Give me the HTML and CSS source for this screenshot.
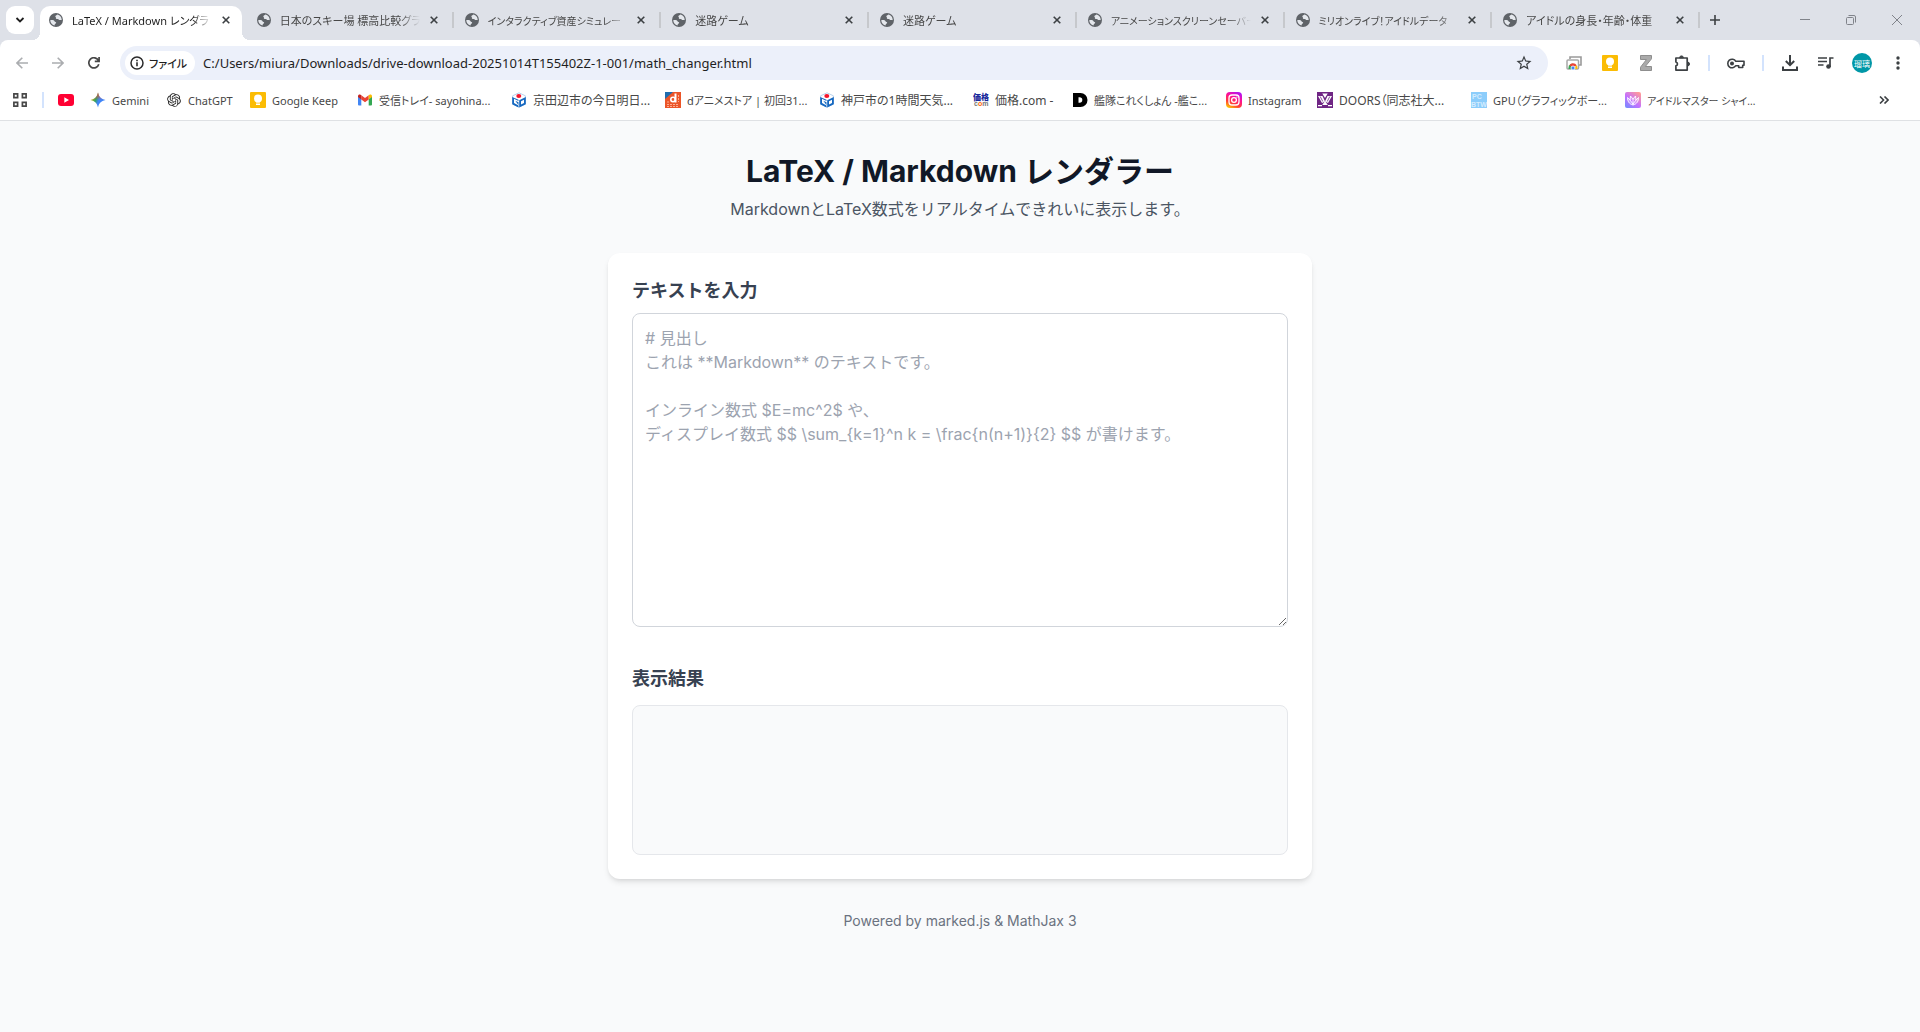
FILE: index.html
```html
<!DOCTYPE html>
<html lang="ja">
<head>
<meta charset="utf-8">
<title>LaTeX / Markdown レンダラー</title>
<link rel="stylesheet" href="styles.css">
</head>
<body>
<svg class="defs" aria-hidden="true">
  <defs>
    <symbol id="globe" viewBox="0 0 14 14"><circle cx="7" cy="7" r="7" fill="#5f6368"/><path d="M1.300 7c1.200.100 2.300-.1 3.300.300 1 .400.900 1.500 1.900 1.700.800.200.900.900.200 1.500-.5.500-1.200.9-1.200 2C3 12 1.200 9.700 1.300 7zM8.200 1.400c-.2.900-1.600.8-1.900 1.700-.2.900.9 1 .6 1.800-.3.700.8 1.100 1.800 1 .9-.1 1 1.100 2 1.200.7 0 1.400-.3 2 .1.200-2.900-1.700-5.300-4.500-5.800z" fill="#e4e7ec"/></symbol>
    <symbol id="close" viewBox="0 0 8 8"><path d="M.7.7l6.600 6.600M7.300.7L.7 7.300" stroke="currentColor" stroke-width="1.600"/></symbol>
    <symbol id="keep" viewBox="0 0 16 16"><rect width="16" height="16" rx="1" fill="#fbbc04"/><circle cx="8" cy="6.500" r="4" fill="#fff"/><path d="M6 9h4v1.500H6zM6 11.500h4V13H6z" fill="#fff"/></symbol>
    <symbol id="cube" viewBox="0 0 16 16"><path d="M8 .8l6.400 3v8.400L8 15.200l-6.400-3V3.800z" fill="#fff" stroke="#b9d3ee" stroke-width="1"/><path d="M1.200 5v7.300l6.300 3.200v-2L3 11V6.800L7.500 9V7.800z" fill="#1668c0"/><path d="M4.300 8.700l3.200 1.500v3z" fill="#1668c0"/><path d="M8.200 8.200l6.600-3.200v7.300l-6.600 3.200zM10 9.300v3.200l3-1.500V7.800z" fill="#1668c0" fill-rule="evenodd"/><ellipse cx="7.800" cy="4" rx="2.500" ry="1.900" fill="#f5152b"/></symbol>
  </defs>
</svg>

<header class="browser">
  <div class="tabstrip">
    <button class="tab-search" aria-label="タブを検索"><svg width="10" height="6" viewBox="0 0 10 6"><path d="M1.500 1L5 4.500 8.500 1" fill="none" stroke="#1f1f1f" stroke-width="1.800"/></svg></button>
    <div class="tabs" role="tablist">
      <div class="tab active"><svg class="favicon"><use href="#globe"/></svg><span class="tab-title">LaTeX / Markdown レンダラ</span><button class="tab-close" aria-label="閉じる"><svg><use href="#close"/></svg></button></div>
      <div class="tab"><svg class="favicon"><use href="#globe"/></svg><span class="tab-title">日本のスキー場 標高比較グラ</span><button class="tab-close" aria-label="閉じる"><svg><use href="#close"/></svg></button></div>
      <div class="tab"><svg class="favicon"><use href="#globe"/></svg><span class="tab-title dense">インタラクティブ資産シミュレー</span><button class="tab-close" aria-label="閉じる"><svg><use href="#close"/></svg></button></div>
      <div class="tab"><svg class="favicon"><use href="#globe"/></svg><span class="tab-title">迷路ゲーム</span><button class="tab-close" aria-label="閉じる"><svg><use href="#close"/></svg></button></div>
      <div class="tab"><svg class="favicon"><use href="#globe"/></svg><span class="tab-title">迷路ゲーム</span><button class="tab-close" aria-label="閉じる"><svg><use href="#close"/></svg></button></div>
      <div class="tab"><svg class="favicon"><use href="#globe"/></svg><span class="tab-title dense">アニメーションスクリーンセーバー</span><button class="tab-close" aria-label="閉じる"><svg><use href="#close"/></svg></button></div>
      <div class="tab"><svg class="favicon"><use href="#globe"/></svg><span class="tab-title dense">ミリオンライブ！アイドルデータ</span><button class="tab-close" aria-label="閉じる"><svg><use href="#close"/></svg></button></div>
      <div class="tab"><svg class="favicon"><use href="#globe"/></svg><span class="tab-title">アイドルの身長・年齢・体重</span><button class="tab-close" aria-label="閉じる"><svg><use href="#close"/></svg></button></div>
    </div>
    <button class="new-tab" aria-label="新しいタブ"><svg width="10" height="10" viewBox="0 0 10 10"><path d="M5 0v10M0 5h10" stroke="#3c4043" stroke-width="1.600"/></svg></button>
    <div class="window-controls">
      <button aria-label="最小化"><svg width="10" height="10" viewBox="0 0 10 10"><path d="M0 4.500h10" stroke="#80838a"/></svg></button>
      <button aria-label="元に戻す"><svg width="10" height="10" viewBox="0 0 10 10" fill="none" stroke="#80838a"><rect x=".5" y="2.500" width="7" height="7" rx="1"/><path d="M2.500.5h5.500a1.500 1.500 0 0 1 1.500 1.500v5.500"/></svg></button>
      <button aria-label="ウィンドウを閉じる"><svg width="10" height="10" viewBox="0 0 10 10"><path d="M0 0l10 10M10 0L0 10" stroke="#80838a"/></svg></button>
    </div>
  </div>

  <div class="toolbar">
    <button class="tool" aria-label="戻る"><svg width="12" height="12" viewBox="0 0 12 12" fill="none" stroke="#abadb0" stroke-width="1.600"><path d="M12 6H1.200M6.300.7L1 6l5.300 5.300"/></svg></button>
    <button class="tool" aria-label="進む"><svg width="12" height="12" viewBox="0 0 12 12" fill="none" stroke="#abadb0" stroke-width="1.600"><path d="M0 6h10.800M5.700.7L11 6l-5.300 5.300"/></svg></button>
    <button class="tool" aria-label="再読み込み"><svg width="12" height="12" viewBox="0 0 12 12" fill="none" stroke="#474747" stroke-width="1.700"><path d="M10.800 7.300A5.100 5.100 0 1 1 10.400 3.400M11.100 0v4.300H6.800"/></svg></button>
    <div class="omnibox">
      <button class="chip"><svg width="14" height="14" viewBox="0 0 14 14"><circle cx="7" cy="7" r="6" fill="none" stroke="#2b2b2b" stroke-width="1.500"/><path d="M6.200 6.200h1.600v4H6.200zM6.200 3.700h1.600v1.500H6.200z" fill="#2b2b2b"/></svg>ファイル</button>
      <input class="url" type="text" aria-label="アドレス" value="C:/Users/miura/Downloads/drive-download-20251014T155402Z-1-001/math_changer.html">
      <button class="star" aria-label="ブックマーク"><svg width="18" height="18" viewBox="0 0 24 24"><path fill="#3c4043" d="M22 9.240l-7.190-.620L12 2 9.190 8.630 2 9.240l5.460 4.730L5.820 21 12 17.270 18.180 21l-1.630-7.030L22 9.240zM12 15.400l-3.760 2.270 1-4.280-3.320-2.880 4.380-.380L12 6.100l1.710 4.040 4.380.380-3.320 2.880 1 4.280L12 15.400z"/></svg></button>
    </div>
    <div class="tools">
      <button class="tool" aria-label="リモート デスクトップ"><svg width="16" height="14" viewBox="0 0 16 14"><path d="M4 3V1h11v8h-2" fill="none" stroke="#9a9a9a" stroke-width="1.600"/><rect x="1" y="4" width="11.500" height="9" rx="1" fill="#fff" stroke="#a8a8a8" stroke-width="1.500"/><path d="M2.500 13a4.500 4.500 0 0 1 4.300-5.500L7 13z" fill="#34a853"/><path d="M3.300 9.200a4.500 4.500 0 0 1 7.500 0L7 12z" fill="#ea4335"/><path d="M10.800 9.200A4.500 4.500 0 0 1 11.300 13H7z" fill="#fbbc04"/><circle cx="7" cy="12" r="2" fill="#4285f4" stroke="#fff" stroke-width=".8"/></svg></button>
      <button class="tool" aria-label="Google Keep"><svg width="16" height="16"><use href="#keep"/></svg></button>
      <button class="tool" aria-label="Zotero"><svg width="12" height="16" viewBox="0 0 12 16"><path d="M.5.5h11v3.300L5.300 11.500h6.200v4H.5v-3.300L6.500 4.500h-6z" fill="#aaa" stroke="#8e8e8e"/></svg></button>
      <button class="tool" aria-label="拡張機能"><svg width="17" height="17" viewBox="0 0 17 17"><path d="M1.900 3h11.300v12.100H1.900v-4.200a2 2 0 0 0 0-3.900z" fill="none" stroke="#3c4043" stroke-width="1.700" stroke-linejoin="round"/><path d="M5.600 2.800a1.900 1.900 0 0 1 3.800 0zM13.600 7.100a1.900 1.900 0 0 1 0 3.800z" fill="#3c4043" stroke="#3c4043"/></svg></button>
      <span class="divider"></span>
      <button class="tool" aria-label="パスワード"><svg width="18" height="11" viewBox="0 0 18 11" fill="none" stroke="#3c4043" stroke-width="1.600"><path d="M8.800 3.300a4.300 4.300 0 1 0 0 4.400h2.900V9.500h4V7.300H17v-4z" stroke-linejoin="round"/><circle cx="5" cy="5.500" r="1.200" fill="#3c4043"/></svg></button>
      <span class="divider"></span>
      <button class="tool" aria-label="ダウンロード"><svg width="16" height="16" viewBox="0 0 16 16" fill="none" stroke="#3c4043" stroke-width="2"><path d="M8 0v10M3.800 6L8 10.200 12.200 6M1 11.500V15h14v-3.500"/></svg></button>
      <button class="tool" aria-label="メディア"><svg width="16" height="14" viewBox="0 0 16 14"><path d="M0 2h9M0 5.500h9M0 9h5.500M12 11V2h3.500" fill="none" stroke="#3c4043" stroke-width="1.700"/><circle cx="10.500" cy="10.500" r="2.300" fill="#3c4043"/></svg></button>
      <button class="tool" aria-label="プロフィール"><span class="avatar">瑠璃</span></button>
      <button class="tool" aria-label="メニュー"><svg width="4" height="14" viewBox="0 0 4 14" fill="#3c4043"><circle cx="2" cy="2" r="1.700"/><circle cx="2" cy="7" r="1.700"/><circle cx="2" cy="12" r="1.700"/></svg></button>
    </div>
  </div>

  <nav class="bookmarks" aria-label="ブックマーク バー">
    <button class="tool apps" aria-label="アプリ"><svg width="14" height="14" viewBox="0 0 14 14" fill="none" stroke="#474747" stroke-width="1.700"><path d="M.9.9h3.700v3.700H.9zM9.400.9h3.700v3.700H9.400zM.9 9.400h3.700v3.700H.9zM9.400 9.400h3.700v3.700H9.400z"/></svg></button>
    <span class="divider"></span>
    <a class="bookmark bm-icon" href="#" aria-label="YouTube"><svg viewBox="0 0 16 16"><rect y="2" width="16" height="12" rx="3" fill="#ff0033"/><path d="M6.300 5.300v5.400L11 8z" fill="#fff"/></svg></a>
    <a class="bookmark bm-xs" href="#"><svg viewBox="0 0 16 16"><defs><linearGradient id="gem" x1="0" y1=".3" x2="1" y2=".7"><stop offset="0" stop-color="#fbbc04"/><stop offset=".35" stop-color="#2fa35c"/><stop offset=".55" stop-color="#4285f4"/><stop offset="1" stop-color="#3c86ff"/></linearGradient><linearGradient id="gemr" x1="0" y1="0" x2="0" y2="1"><stop offset="0" stop-color="#f04438"/><stop offset=".5" stop-color="#f04438" stop-opacity="0"/></linearGradient></defs><path d="M8 .5C9 5 11 7 15.500 8 11 9 9 11 8 15.500 7 11 5 9 .5 8 5 7 7 5 8 .5z" fill="url(#gem)"/><path d="M8 .5C9 5 11 7 15.500 8 11 9 9 11 8 15.500 7 11 5 9 .5 8 5 7 7 5 8 .5z" fill="url(#gemr)"/></svg><span>Gemini</span></a>
    <a class="bookmark bm-sm" href="#"><svg viewBox="-2 -2 28 28"><path fill="#222" d="M22.2819 9.8211a5.9847 5.9847 0 0 0-.5157-4.9108 6.0462 6.0462 0 0 0-6.5098-2.900A6.0651 6.0651 0 0 0 4.9807 4.1818a5.9847 5.9847 0 0 0-3.9977 2.900 6.0462 6.0462 0 0 0 .7427 7.0966 5.980 5.980 0 0 0 .511 4.9107 6.051 6.051 0 0 0 6.5146 2.9001A5.9847 5.9847 0 0 0 13.2599 24a6.0557 6.0557 0 0 0 5.7718-4.2058 5.9894 5.9894 0 0 0 3.9977-2.9001 6.0557 6.0557 0 0 0-.7475-7.0729zm-9.022 12.6081a4.4755 4.4755 0 0 1-2.8764-1.0408l.1419-.0804 4.7783-2.7582a.7948.7948 0 0 0 .3927-.6813v-6.7369l2.020 1.1686a.071.071 0 0 1 .038.052v5.5826a4.504 4.504 0 0 1-4.4945 4.4944zm-9.6607-4.1254a4.4708 4.4708 0 0 1-.5346-3.0137l.142.0852 4.783 2.7582a.7712.7712 0 0 0 .7806 0l5.8428-3.3685v2.3324a.0804.0804 0 0 1-.0332.0615L9.740 19.9502a4.4992 4.4992 0 0 1-6.1408-1.6464zM2.3408 7.8956a4.485 4.485 0 0 1 2.3655-1.9728V11.600a.7664.7664 0 0 0 .3879.6765l5.8144 3.3543-2.0201 1.1685a.0757.0757 0 0 1-.071 0l-4.8303-2.7865A4.504 4.504 0 0 1 2.3408 7.872zm16.5963 3.8558L13.1038 8.364 15.1192 7.200a.0757.0757 0 0 1 .071 0l4.8303 2.7913a4.4944 4.4944 0 0 1-.6765 8.1042v-5.6772a.790.790 0 0 0-.407-.667zm2.0107-3.0231l-.142-.0852-4.7735-2.7818a.7759.7759 0 0 0-.7854 0L9.409 9.2297V6.8974a.0662.0662 0 0 1 .0284-.0615l4.8303-2.7866a4.4992 4.4992 0 0 1 6.6802 4.660zM8.3065 12.863l-2.020-1.1638a.0804.0804 0 0 1-.038-.0567V6.0742a4.4992 4.4992 0 0 1 7.3757-3.4537l-.142.0805L8.704 5.459a.7948.7948 0 0 0-.3927.6813zm1.0976-2.3654l2.602-1.4998 2.6069 1.4998v2.9994l-2.5974 1.4997-2.6067-1.4997Z"/></svg><span>ChatGPT</span></a>
    <a class="bookmark bm-md" href="#"><svg><use href="#keep"/></svg><span>Google Keep</span></a>
    <a class="bookmark bm-lg" href="#"><svg viewBox="0 0 16 16"><path d="M1 4l3.300 2.400V13.500H2a1 1 0 0 1-1-1z" fill="#4285f4"/><path d="M15 4l-3.300 2.400V13.500H14a1 1 0 0 0 1-1z" fill="#34a853"/><path d="M4.300 3.300L8 6.100l3.700-2.800v4.100L8 10.200 4.300 7.400z" fill="#ea4335"/><path d="M1 4.200c0-1.600 1.600-2.200 2.800-1.300l.5.400v4.100L1 5z" fill="#c5221f"/><path d="M15 4.200c0-1.600-1.600-2.200-2.800-1.300l-.5.400v4.100L15 5z" fill="#fbbc04"/></svg><span>受信トレイ- sayohina...</span></a>
    <a class="bookmark bm-lg wide" href="#"><svg><use href="#cube"/></svg><span>京田辺市の今日明日...</span></a>
    <a class="bookmark bm-lg" href="#"><svg viewBox="0 0 16 16"><rect width="16" height="16" fill="#eb5528"/><path d="M0 0h8L0 7z" fill="#1f6cae"/><path d="M10.500 1.500v9" fill="none" stroke="#fff" stroke-width="2"/><circle cx="8" cy="7.500" r="2.200" fill="none" stroke="#fff" stroke-width="1.600"/><path d="M2 12.500h12M2 14.500h12M13.500 3v7M2 10h2" fill="none" stroke="#ffb59c" stroke-width=".9" stroke-dasharray="2 1"/></svg><span>dアニメストア | 初回31...</span></a>
    <a class="bookmark bm-lg wide" href="#"><svg><use href="#cube"/></svg><span>神戸市の1時間天気...</span></a>
    <a class="bookmark bm-md2 wide" href="#"><svg viewBox="0 0 16 16"><text x="0" y="8" class="logo-kakaku">価格</text><text x="1" y="14" class="logo-com">c<tspan fill="#f60">o</tspan>m</text></svg><span>価格.com -</span></a>
    <a class="bookmark bm-lg" href="#"><svg viewBox="0 0 16 16"><path d="M1 1h7.500a7 7 0 0 1 0 14H1z"/><path d="M6.500 5.200h1a2.800 2.800 0 0 1 0 5.600h-1z" fill="#fff"/></svg><span>艦隊これくしょん -艦こ...</span></a>
    <a class="bookmark bm-sm2" href="#"><svg viewBox="0 0 16 16"><defs><linearGradient id="ig" x1=".2" y1="1" x2=".7" y2="0"><stop offset="0" stop-color="#ffc800"/><stop offset=".3" stop-color="#ff3f35"/><stop offset=".65" stop-color="#ff0f96"/><stop offset="1" stop-color="#b414f0"/></linearGradient></defs><rect width="16" height="16" rx="4" fill="url(#ig)"/><g fill="none" stroke="#fff" stroke-width="1.300"><rect x="3" y="3" width="10" height="10" rx="3"/><circle cx="8" cy="8" r="2.400"/></g><circle cx="10.900" cy="5.100" r=".7" fill="#fff"/></svg><span>Instagram</span></a>
    <a class="bookmark bm-lg wide" href="#"><svg viewBox="0 0 16 16"><rect width="16" height="16" fill="#6f2584"/><path d="M8 6L5.300 1.500h5.400zM1 4h4.500L8 9.500 5 11zM15 4h-4.500L8 9.500l3 1.500z" fill="#fff"/><path d="M8 9l2.800 4H5.200z" fill="#fff"/><path d="M3.200 4.500l2.600 5M12.800 4.500l-2.600 5" stroke="#6f2584" stroke-width=".8"/><path d="M1 13.700h4M11 13.700h4" stroke="#fff" stroke-width="1.200"/></svg><span>DOORS（同志社大...</span></a>
    <a class="bookmark bm-lg" href="#"><svg viewBox="0 0 16 16"><rect width="16" height="16" fill="#8ccdfb"/><text x="1" y="7" class="logo-pc">PC</text><text x="0" y="15" class="logo-pc">BTW</text></svg><span>GPU（グラフィックボー...</span></a>
    <a class="bookmark bm-lg dense" href="#"><svg viewBox="0 0 16 16"><defs><linearGradient id="idol" x1="0" y1="1" x2=".8" y2="0"><stop offset="0" stop-color="#6f8cff"/><stop offset=".5" stop-color="#c470ff"/><stop offset="1" stop-color="#ff9a9a"/></linearGradient></defs><rect width="16" height="16" rx="2" fill="url(#idol)"/><path d="M8 13C4 12 2.500 9 2.500 5.500L5 8l.5-4L8 7l2.500-3 .5 4 2.500-2.500C13.500 9 12 12 8 13zM8 7v6M5 8l3 4 3-4" fill="#ffffff40" stroke="#fff" stroke-width=".9"/></svg><span>アイドルマスター シャイ...</span></a>
    <button class="tool more" aria-label="その他"><svg width="10" height="8" viewBox="0 0 10 8" fill="none" stroke="#3c4043" stroke-width="1.600"><path d="M1 .5L4.500 4 1 7.500M5.500.5L9 4 5.500 7.500"/></svg></button>
  </nav>
</header>

<main class="page">
  <header class="intro">
    <h1>LaTeX / Markdown レンダラー</h1>
    <p>MarkdownとLaTeX数式をリアルタイムできれいに表示します。</p>
  </header>
  <section class="card">
    <div class="field">
      <label for="source">テキストを入力</label>
      <textarea id="source" rows="12" placeholder="# 見出し
これは **Markdown** のテキストです。

インライン数式 $E=mc^2$ や、
ディスプレイ数式 $$ \sum_{k=1}^n k = \frac{n(n+1)}{2} $$ が書けます。"></textarea>
    </div>
    <h2>表示結果</h2>
    <div class="result"></div>
  </section>
  <footer>Powered by marked.js &amp; MathJax 3</footer>
</main>
</body>
</html>
```

FILE: styles.css
```css
*, *::before, *::after { box-sizing: border-box; }
body {
  margin: 0;
  min-height: 100vh;
  background: #f9fafb;
  font-family: Inter, "Noto Sans CJK JP", sans-serif;
  color: #1f2937;
}
h1, h2, p { margin: 0; }
button { border: 0; padding: 0; background: none; color: inherit; font: inherit; }
.defs { display: none; }

/* Browser frame */
.browser {
  font-family: "Noto Sans", "Noto Sans CJK JP", sans-serif;
  font-size: 11px;
  font-feature-settings: "palt";
  color: #474747;
  background: #dee1e8;
  border-bottom: 1px solid #dfe1e4;
}
.browser svg { display: block; flex: none; }
.browser .dense { font-size: 10px; }
.browser .wide { font-size: 12px; }
.tabstrip { display: flex; height: 40px; padding-left: 6px; }
.tab-search {
  display: flex; align-items: center; justify-content: center; flex: none;
  width: 28px; height: 28px; margin: 6px 2px 0 0;
  border-radius: 9px; background: #fff;
}
.tabs { display: flex; flex: 0 1 1662px; min-width: 0; }
.tab {
  position: relative;
  display: flex; align-items: center; flex: 1 1 0; min-width: 0;
  padding: 0 14px 0 13px;
}
.tab::after {
  content: ""; position: absolute; right: -2px; top: 12px;
  width: 2px; height: 16px; background: #c6c8cc;
}
.tab.active { color: #1f1f1f; z-index: 0; }
.tab.active::before {
  content: ""; position: absolute; z-index: -1; inset: 6px 2px 0 4px;
  border-radius: 10px 10px 0 0; background: #fff;
}
.tab.active::after {
  left: -4px; right: -6px; top: auto; bottom: 0; width: auto; height: 8px; z-index: -1;
  background:
    radial-gradient(circle at 0 0, transparent 8px, #fff 8px) left / 8px 8px no-repeat,
    radial-gradient(circle at 100% 0, transparent 8px, #fff 8px) right / 8px 8px no-repeat;
}
.favicon { width: 14px; height: 14px; }
.tab-title {
  flex: 1; min-width: 0; margin: 0 10px 0 9px;
  overflow: hidden; white-space: nowrap;
  mask-image: linear-gradient(to left, transparent, #000 20px);
}
.tab-close { color: #3c4043; }
.tab-close svg { width: 8px; height: 8px; }
.new-tab { display: flex; align-items: center; justify-content: center; width: 34px; }
.window-controls { display: flex; margin-left: auto; }
.window-controls button { display: flex; align-items: center; justify-content: center; width: 46px; }

.toolbar {
  display: flex; align-items: center; height: 46px; padding: 0 4px;
  border-radius: 8px 8px 0 0; background: #fff;
}
.tool { display: flex; align-items: center; justify-content: center; flex: none; width: 36px; height: 32px; }
.omnibox {
  display: flex; align-items: center; flex: 1; min-width: 0;
  height: 34px; margin: 0 8px; padding: 0 10px 0 5px;
  border-radius: 17px; background: #ecf0fa;
}
.chip {
  display: flex; align-items: center; gap: 5px; flex: none;
  height: 24px; padding: 0 8px 0 5px;
  border-radius: 12px; background: #fff; color: #1f1f1f; font-weight: 500;
}
.url {
  flex: 1; min-width: 0; border: 0; padding: 0 8px; background: none;
  font-family: inherit; font-size: 13px; color: #1f1f1f;
}
.star { display: flex; align-items: center; justify-content: center; width: 28px; }
.tools { display: flex; align-items: center; }
.divider { flex: none; width: 2px; height: 16px; margin: 0 8px; background: #d3e3fd; }
.avatar {
  display: flex; align-items: center; justify-content: center;
  width: 20px; height: 20px; border-radius: 50%;
  background: #0097a7; color: #fff; font-size: 8px;
}

.bookmarks { display: flex; align-items: center; height: 34px; padding: 0 18px 6px 2px; background: #fff; }
.bookmarks .divider { margin: 0 14px 0 4px; }
.bookmark {
  display: flex; align-items: center; gap: 6px; flex: none;
  color: #474747; text-decoration: none; white-space: nowrap;
}
.bookmark svg { width: 16px; height: 16px; }
.bm-icon { width: 32px; }
.bm-xs { width: 76px; }
.bm-sm { width: 84px; }
.bm-sm2 { width: 91px; }
.bm-md2 { width: 99px; }
.bm-md { width: 107px; }
.bm-lg { width: 154px; }
.more { margin-left: auto; }
.logo-kakaku { font: 900 8px "Noto Sans CJK JP", sans-serif; fill: #1a2a9c; }
.logo-com { font: 700 7px "Liberation Sans", sans-serif; fill: #777; }
.logo-pc { font: 700 7px "Liberation Sans", sans-serif; fill: #d4ecfe; }

/* Renderer page */
.page { max-width: 768px; margin: 0 auto; padding: 32px; }
.intro { margin-bottom: 32px; text-align: center; }
h1 { font-size: 30px; line-height: 36px; font-weight: 700; color: #111827; }
.intro p { margin-top: 8px; font-size: 16px; line-height: 24px; color: #4b5563; }
.card {
  padding: 24px; border-radius: 12px; background: #fff;
  box-shadow: 0 4px 6px -1px rgb(0 0 0 / .1), 0 2px 4px -2px rgb(0 0 0 / .1);
}
.field { margin-bottom: 38px; }
label, h2 { display: block; font-size: 18px; line-height: 28px; font-weight: 600; color: #374151; }
label { margin-bottom: 8px; }
h2 { margin-bottom: 12px; }
textarea {
  display: block; width: 100%; padding: 12px;
  border: 1px solid #d1d5db; border-radius: 8px; background: #fff;
  font-family: inherit; font-size: 16px; line-height: 24px; color: inherit;
}
textarea::placeholder { color: #9ca3af; }
.result { min-height: 150px; border: 1px solid #e5e7eb; border-radius: 8px; background: #f9fafb; }
footer { margin-top: 32px; text-align: center; font-size: 14px; line-height: 20px; color: #6b7280; }
```
